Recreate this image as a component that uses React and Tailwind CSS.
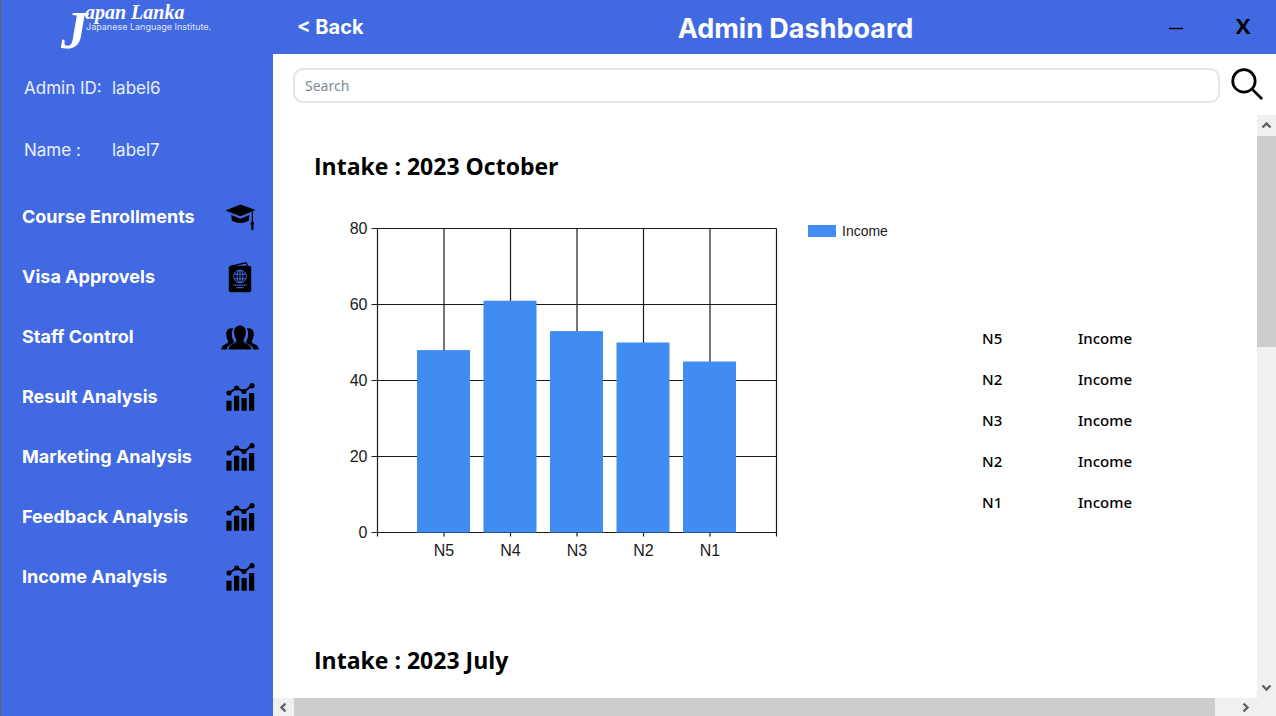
import React from "react";

function CapIcon() {
  return (
    <svg width="31" height="27" viewBox="50 27 94 81" aria-hidden="true">
      <path d="M51 46 L97 28 L143 45 L97 64 Z" />
      <path d="M69 60 L97 71 L124 60 L122 77 Q97 92 71 77 Z" />
      <path d="M133 49 V84" stroke="#000" strokeWidth="4" />
      <path d="M130 80 H136 L138 87 L136 90 L137 105 H129 L130 90 L127 87 Z" />
    </svg>
  );
}

function PassportIcon() {
  return (
    <svg width="24" height="31" viewBox="53 201 72 94" aria-hidden="true">
      <path d="M60 214 L104 204 Q110 203 111 214" fill="none" stroke="#000" strokeWidth="4" />
      <rect x="55" y="212" width="68" height="81" rx="8" />
      <g fill="none" stroke="#4169e1" strokeWidth="3">
        <circle cx="89" cy="245" r="19" />
        <ellipse cx="89" cy="245" rx="9" ry="19" />
        <path d="M89 226 V264 M72 238 H106 M72 252 H106" />
        <path d="M69 271 H109 M77 279 H101" />
      </g>
    </svg>
  );
}

function PeopleIcon() {
  return (
    <svg width="38" height="25" viewBox="24 392 116 75" aria-hidden="true">
      <path d="M62 402 C50 398 38 406 40 422 C41 434 46 438 46 443 C46 449 25 449 25 466 H42 C42 450 64 450 65 443 C60 436 57 430 57 418 C57 410 59 405 62 402 Z" />
      <path d="M102 402 C114 398 126 406 124 422 C123 434 118 438 118 443 C118 449 139 449 139 466 H122 C122 450 100 450 99 443 C104 436 107 430 107 418 C107 410 105 405 102 402 Z" />
      <path d="M82 393 C70 393 63 402 64 416 C65 430 71 433 71 440 C71 449 48 448 47 466 H117 C116 448 93 449 93 440 C93 433 99 430 100 416 C101 402 94 393 82 393 Z" />
    </svg>
  );
}

function AnalysisIcon() {
  return (
    <svg width="29" height="28" viewBox="0 0 29 28" aria-hidden="true">
      <rect x="0.4" y="17.8" width="5.2" height="10" rx="0.5" />
      <rect x="8" y="12.8" width="5.2" height="15" rx="0.5" />
      <rect x="15.5" y="15" width="5.2" height="12.8" rx="0.5" />
      <rect x="23" y="10" width="5.2" height="17.8" rx="0.5" />
      <path d="M3 10 L10.6 5 L18 8.5 L26 2.6" fill="none" stroke="#000" strokeWidth="2" />
      <circle cx="3" cy="10" r="2.6" />
      <circle cx="10.6" cy="5" r="2.6" />
      <circle cx="18" cy="8.5" r="2.6" />
      <circle cx="26" cy="2.7" r="2.6" />
    </svg>
  );
}

const NAV = [
  ["Course Enrollments", CapIcon],
  ["Visa Approvels", PassportIcon],
  ["Staff Control", PeopleIcon],
  ["Result Analysis", AnalysisIcon],
  ["Marketing Analysis", AnalysisIcon],
  ["Feedback Analysis", AnalysisIcon],
  ["Income Analysis", AnalysisIcon],
];

const DATA = [
  ["N5", 48],
  ["N4", 61],
  ["N3", 53],
  ["N2", 50],
  ["N1", 45],
];

const LEVELS = ["N5", "N2", "N3", "N2", "N1"];

function Logo() {
  return (
    <svg width="164" height="64" viewBox="0 0 164 64" fill="#fff" role="img" aria-label="Japan Lanka Japanese Language Institute">
      <g className="font-['Liberation_Serif',serif] font-bold italic">
        <text x="8" y="48" fontSize="53">J</text>
        <text x="32" y="19" fontSize="20">apan Lanka</text>
      </g>
      <text x="33" y="30" fontSize="9" className="font-['Inter',sans-serif]" fillOpacity="0.85">
        Japanese Language Institute.
      </text>
    </svg>
  );
}

function Sidebar() {
  return (
    <aside className="flex w-[273px] shrink-0 flex-col border-l border-[#5b6470] bg-[#4169e1] font-['Inter',sans-serif] text-white">
      <div className="h-[57px] pl-[52px]">
        <Logo />
      </div>
      <dl className="grid grid-cols-[88px_1fr] pl-[23px] text-[17px] leading-[62px] text-white/90">
        <dt>Admin ID:</dt>
        <dd>label6</dd>
        <dt>Name :</dt>
        <dd>label7</dd>
      </dl>
      <nav className="mt-1.5 flex flex-col">
        {NAV.map(([label, Icon]) => (
          <button key={label} type="button" className="flex h-[60px] items-center justify-between pr-[13px] pl-[21px] text-left text-lg font-bold">
            <span>{label}</span>
            <span className="flex w-10 justify-center text-black">
              <Icon />
            </span>
          </button>
        ))}
      </nav>
    </aside>
  );
}

function Header() {
  return (
    <header className="flex h-[54px] shrink-0 items-center bg-[#4169e1] pr-6 pl-6 font-['Inter',sans-serif]">
      <button type="button" className="w-36 text-left text-xl font-bold text-white">
        &lt; Back
      </button>
      <h1 className="flex-1 pt-1 text-center text-[27px] font-bold text-white">Admin Dashboard</h1>
      <div className="flex w-[102px] items-center justify-end gap-[50px] text-black">
        <button type="button" aria-label="Minimize">
          <svg width="16" height="16" viewBox="0 0 16 16" aria-hidden="true">
            <path d="M1 9.5 H15" stroke="#000" strokeWidth="1.4" />
          </svg>
        </button>
        <button type="button" aria-label="Close" className="w-[18px] pb-1 text-center font-['Open_Sans',sans-serif] text-[22px] font-bold">
          X
        </button>
      </div>
    </header>
  );
}

function SearchBar() {
  return (
    <form className="flex shrink-0 items-start gap-[11px] pt-3.5 pr-[13px] pb-3 pl-5" onSubmit={(e) => e.preventDefault()}>
      <input
        type="text"
        aria-label="Search"
        placeholder="Search"
        className="h-[35px] min-w-0 flex-1 rounded-[10px] border-2 border-[#e1e5ea] px-2.5 font-['Noto_Sans',sans-serif] text-sm outline-none placeholder:text-[#7d8896]"
      />
      <button type="submit" aria-label="Run search">
        <svg width="32" height="32" viewBox="334 204 94 94" fill="none" stroke="#000" strokeWidth="8" strokeLinecap="round" aria-hidden="true">
          <circle cx="372" cy="242" r="33" />
          <path d="M396 266 L423 293" />
        </svg>
      </button>
    </form>
  );
}

function IncomeChart() {
  const left = 63.5;
  const top = 13.5;
  const step = 66.5;
  const height = 304;
  const right = left + step * 6;
  const bottom = top + height;
  return (
    <svg width="600" height="360" viewBox="0 0 600 360" className="shrink-0 font-['Liberation_Sans',sans-serif]" role="img" aria-label="Income by level">
      <g stroke="#1a1a1a" strokeWidth="1.2">
        {[0, 20, 40, 60, 80].map((v) => {
          const y = bottom - (v / 80) * height;
          return <line key={v} x1={left - 6} x2={right} y1={y} y2={y} />;
        })}
        {[0, 1, 2, 3, 4, 5, 6].map((i) => (
          <line key={i} x1={left + i * step} x2={left + i * step} y1={top} y2={bottom + 4} />
        ))}
      </g>
      <g fill="#1a1a1a" fontSize="16">
        {[0, 20, 40, 60, 80].map((v) => (
          <text key={v} x={left - 10} y={bottom - (v / 80) * height + 5} textAnchor="end">
            {v}
          </text>
        ))}
        {DATA.map(([name], i) => (
          <text key={name} x={left + (i + 1) * step} y={bottom + 23} textAnchor="middle">
            {name}
          </text>
        ))}
      </g>
      {DATA.map(([name, v], i) => (
        <rect key={name} x={left + (i + 1) * step - 27} y={bottom - (v / 80) * height} width="53" height={(v / 80) * height} fill="#418cf0" />
      ))}
      <rect x="494" y="10" width="28" height="12" fill="#418cf0" />
      <text x="528" y="21" fontSize="14" fill="#1a1a1a">
        Income
      </text>
    </svg>
  );
}

function Intake({ title, children }) {
  return (
    <section className="mb-[70px]">
      <h2 className="font-['Open_Sans',sans-serif] text-[23px] leading-[30px] font-bold whitespace-nowrap">{title}</h2>
      {children}
    </section>
  );
}

function IntakeDetails() {
  return (
    <div className="mt-[34px] flex items-start gap-[68px]">
      <IncomeChart />
      <table className="mt-[103px] shrink-0 text-left font-['Noto_Sans',sans-serif] text-[15px] font-medium">
        <tbody>
          {LEVELS.map((level, i) => (
            <tr key={i} className="h-[41px]">
              <th scope="row" className="w-24 p-0 font-medium">
                {level}
              </th>
              <td className="p-0">Income</td>
            </tr>
          ))}
        </tbody>
      </table>
    </div>
  );
}

function Arrow({ d }) {
  return (
    <svg width="11" height="11" viewBox="0 0 11 11" fill="none" stroke="#606060" strokeWidth="2.4" aria-hidden="true">
      <path d={d} />
    </svg>
  );
}

export default function App() {
  return (
    <div className="flex h-screen overflow-hidden bg-white text-black">
      <Sidebar />
      <div className="flex min-w-0 flex-1 flex-col">
        <Header />
        <SearchBar />
        <div className="flex min-h-0 flex-1">
          <main className="min-w-0 flex-1 overflow-hidden pt-9 pl-[41px]">
            <Intake title="Intake : 2023 October">
              <IntakeDetails />
            </Intake>
            <Intake title="Intake : 2023 July" />
          </main>
          <div className="flex w-[19px] shrink-0 flex-col items-center bg-[#f0f0f0]">
            <button type="button" aria-label="Scroll up" className="flex h-[21px] items-center">
              <Arrow d="M1.5 7.5 L5.5 3.5 L9.5 7.5" />
            </button>
            <div className="flex w-full flex-1 flex-col">
              <div className="h-[39%] bg-[#cdcdcd]" />
            </div>
            <button type="button" aria-label="Scroll down" className="flex h-[21px] items-center">
              <Arrow d="M1.5 3.5 L5.5 7.5 L9.5 3.5" />
            </button>
          </div>
        </div>
        <div className="flex h-[18px] shrink-0 items-center bg-[#f0f0f0] pr-[19px]">
          <button type="button" aria-label="Scroll left" className="flex w-[21px] justify-center">
            <Arrow d="M7.5 1.5 L3.5 5.5 L7.5 9.5" />
          </button>
          <div className="h-full flex-1">
            <div className="h-full w-[98%] bg-[#cdcdcd]" />
          </div>
          <button type="button" aria-label="Scroll right" className="flex w-[23px] justify-center">
            <Arrow d="M3.5 1.5 L7.5 5.5 L3.5 9.5" />
          </button>
        </div>
      </div>
    </div>
  );
}
